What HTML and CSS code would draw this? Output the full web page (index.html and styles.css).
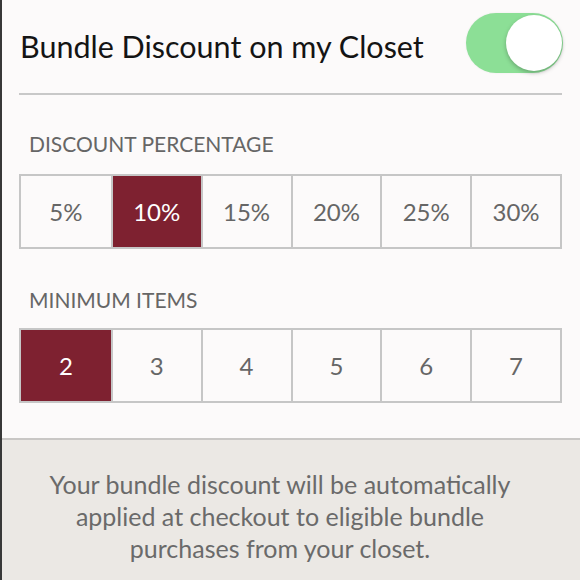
FILE: index.html
```html
<!DOCTYPE html>
<html>
<head>
<meta charset="utf-8">
<link rel="stylesheet" href="styles.css">
</head>
<body>
<div class="page">
  <div class="panel">
    <div class="header">
      <div class="title">Bundle Discount on my Closet</div>
      <div class="toggle"><div class="knob"></div></div>
    </div>
    <div class="rule"></div>
    <div class="label label-first">DISCOUNT PERCENTAGE</div>
    <div class="options options-first">
      <div class="opt">5%</div>
      <div class="opt selected">10%</div>
      <div class="opt">15%</div>
      <div class="opt">20%</div>
      <div class="opt">25%</div>
      <div class="opt">30%</div>
    </div>
    <div class="label label-second">MINIMUM ITEMS</div>
    <div class="options options-second">
      <div class="opt selected">2</div>
      <div class="opt">3</div>
      <div class="opt">4</div>
      <div class="opt">5</div>
      <div class="opt">6</div>
      <div class="opt">7</div>
    </div>
  </div>
  <div class="footer">
    <p class="note">Your bundle discount will be automatically applied at checkout to eligible bundle purchases from your closet.</p>
  </div>
</div>
</body>
</html>
```

FILE: styles.css
```css
html, body {
  margin: 0;
  padding: 0;
  height: 100%;
}
body {
  font-family: Lato, "Open Sans", sans-serif;
  background: #ebe8e4;
}
.page {
  width: 580px;
  height: 580px;
  display: flex;
  flex-direction: column;
  overflow: hidden;
  border-left: 2px solid #383838;
  box-sizing: border-box;
}
.panel {
  background: #fcfafa;
  height: 440px;
  box-sizing: border-box;
  padding: 0 18px 0 17px;
  border-bottom: 2px solid #c9c7c5;
  flex: none;
}
.header {
  height: 93px;
  display: flex;
  align-items: center;
  justify-content: space-between;
}
.title {
  font-size: 30.5px;
  color: #141414;
  margin-top: -2px;
  padding-left: 1px;
}
.toggle {
  width: 97px;
  height: 60px;
  border-radius: 30px;
  background: #8cdf96;
  position: relative;
  margin-right: -1px;
  margin-top: -8px;
  box-shadow: 0 0 2px rgba(0,0,0,0.08);
}
.knob {
  position: absolute;
  right: 1px;
  top: 2px;
  width: 56px;
  height: 56px;
  border-radius: 50%;
  background: #ffffff;
  box-shadow: 0 2px 4px rgba(0,0,0,0.25);
}
.rule {
  height: 2px;
  background: #c8c8c8;
}
.label {
  font-size: 21px;
  color: #666666;
  padding-left: 10px;
  line-height: 24px;
}
.label-first {
  margin-top: 37px;
}
.label-second {
  margin-top: 39px;
}
.options {
  display: grid;
  grid-template-columns: repeat(6, 1fr);
  border: 2px solid #c6c6c6;
  background: #fcfafa;
  height: 75px;
  box-sizing: border-box;
}
.options-first {
  margin-top: 18px;
}
.options-second {
  margin-top: 16px;
}
.opt {
  display: flex;
  align-items: center;
  justify-content: center;
  font-size: 24px;
  color: #666666;
  border-left: 2px solid #c6c6c6;
}
.opt:first-child {
  border-left: none;
}
.opt.selected {
  background: #7e2130;
  color: #ffffff;
}
.footer {
  flex: 1;
  display: flex;
  justify-content: center;
  padding-top: 28px;
  padding-right: 22px;
}
.note {
  margin: 0;
  width: 480px;
  text-align: center;
  font-size: 25px;
  line-height: 32px;
  color: #6a6a6a;
}
```
